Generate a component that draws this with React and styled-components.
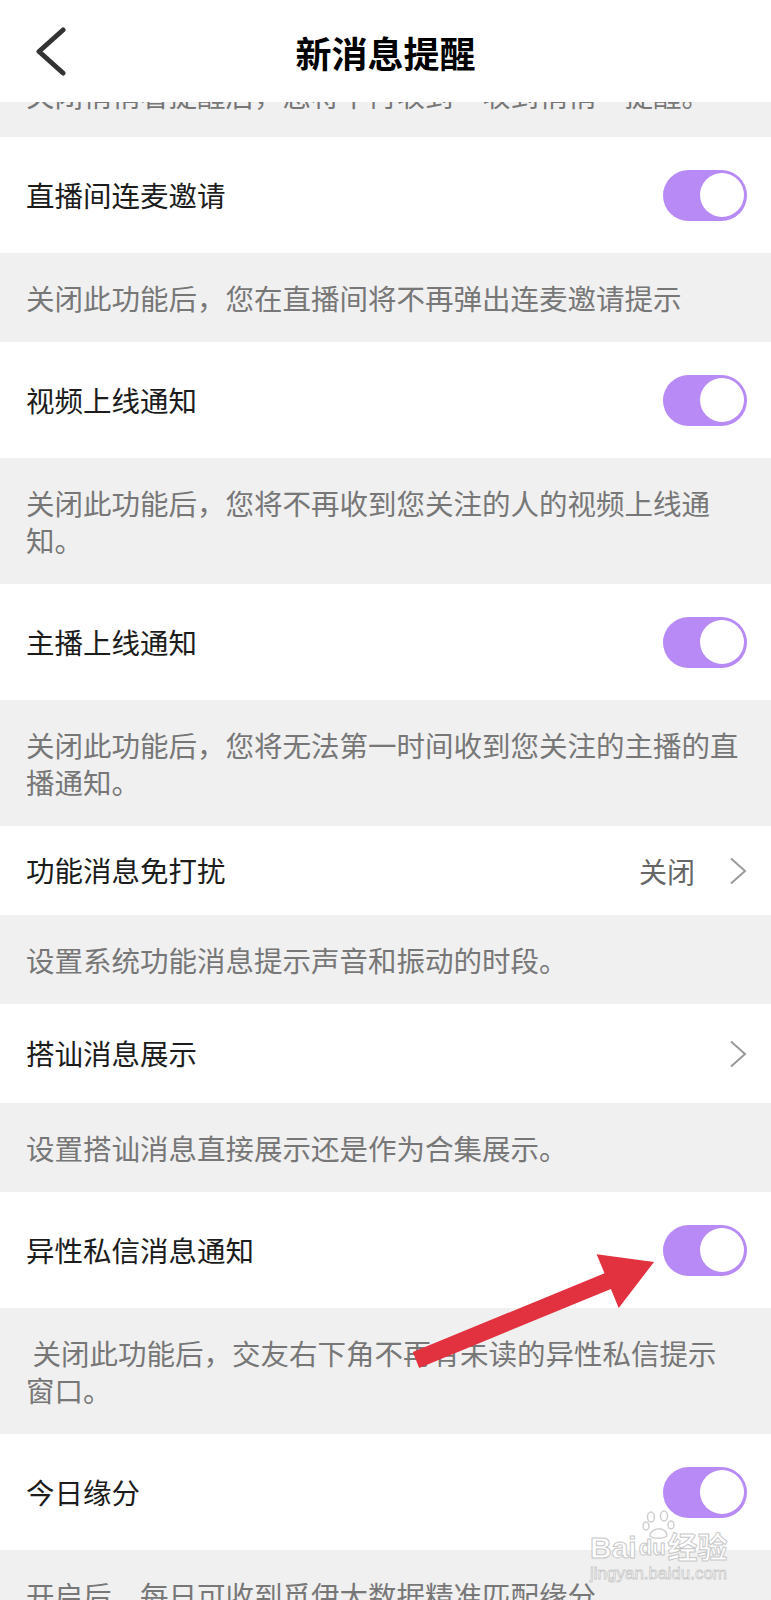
import React from 'react'
import styled, { createGlobalStyle } from 'styled-components'

const GlobalStyle = createGlobalStyle`
  html, body {
    margin: 0;
    padding: 0;
    background: #fff;
  }
  body {
    font-family: "Noto Sans CJK SC", "Noto Sans", sans-serif;
  }
`

const items = [
  { label: '直播间连麦邀请', type: 'toggle', note: '关闭此功能后，您在直播间将不再弹出连麦邀请提示' },
  { label: '视频上线通知', type: 'toggle', note: '关闭此功能后，您将不再收到您关注的人的视频上线通知。' },
  { label: '主播上线通知', type: 'toggle', note: '关闭此功能后，您将无法第一时间收到您关注的主播的直播通知。' },
  { label: '功能消息免打扰', type: 'link', value: '关闭', height: 89, note: '设置系统功能消息提示声音和振动的时段。' },
  { label: '搭讪消息展示', type: 'link', height: 99, note: '设置搭讪消息直接展示还是作为合集展示。' },
  { label: '异性私信消息通知', type: 'toggle', note: '\u00a0关闭此功能后，交友右下角不再有未读的异性私信提示窗口。' },
  { label: '今日缘分', type: 'toggle', note: '开启后，每日可收到觅伊大数据精准匹配缘分。' },
]

export default function App() {
  return (
    <Page>
      <GlobalStyle />
      <Header>
        <BackButton>
          <svg width="36" height="50" viewBox="0 0 36 50">
            <polyline points="30,3 6,24.5 30,46" fill="none" stroke="#333" strokeWidth="5" strokeLinecap="round" strokeLinejoin="round" />
          </svg>
        </BackButton>
        <Title>新消息提醒</Title>
        <span />
      </Header>

      <ClippedNote>
        <NoteText>关闭悄悄看提醒后，您将不再收到“收到悄悄”提醒。</NoteText>
      </ClippedNote>

      {items.map((item) => (
        <React.Fragment key={item.label}>
          <Row $height={item.height || 116}>
            <Label>{item.label}</Label>
            {item.type === 'toggle' ? (
              <Toggle>
                <Knob />
              </Toggle>
            ) : (
              <Trailing>
                {item.value && <Value>{item.value}</Value>}
                <svg width="18" height="28" viewBox="0 0 18 28">
                  <polyline points="2,1.5 16,14 2,26.5" fill="none" stroke="#9a9a9a" strokeWidth="2" />
                </svg>
              </Trailing>
            )}
          </Row>
          <Note>{item.note}</Note>
        </React.Fragment>
      ))}

      <Arrow width="270" height="140" viewBox="0 0 270 140">
        <polygon
          points="12.8,112.1 204.5,33.2 196.6,14.2 254,22 218.7,67.9 210.9,48.9 19.2,127.9"
          fill="#e2323f"
        />
      </Arrow>

      <Watermark>
        <Paw width="34" height="30" viewBox="0 0 34 30">
          <g fill="none" stroke="#cfcfcf" strokeWidth="1.5">
            <ellipse cx="9" cy="7" rx="3.5" ry="5" />
            <ellipse cx="22" cy="6" rx="3.5" ry="5" />
            <ellipse cx="4" cy="16" rx="3" ry="4" />
            <ellipse cx="29" cy="15" rx="3" ry="4" />
            <path d="M8 26 C 8 17, 25 16, 25 26 C 22 29, 11 29, 8 26 Z" />
          </g>
        </Paw>
        <Brand>Bai<BrandBox>du</BrandBox>经验</Brand>
        <Site>jingyan.baidu.com</Site>
      </Watermark>
    </Page>
  )
}

const Page = styled.div`
  position: relative;
  width: 771px;
  height: 1600px;
  overflow: hidden;
  background: #f0f0f0;
`

const Header = styled.div`
  position: relative;
  z-index: 2;
  display: grid;
  grid-template-columns: 1fr auto 1fr;
  align-items: center;
  height: 102px;
  background: #fff;
`

const BackButton = styled.div`
  display: flex;
  align-items: center;
  padding-left: 33px;
  padding-top: 2px;
`

const Title = styled.h1`
  margin: 0;
  font-size: 36px;
  font-weight: 700;
  color: #000;
  line-height: 1;
  padding-top: 2px;
`

const ClippedNote = styled.div`
  height: 35px;
  overflow: hidden;
  background: #f0f0f0;
`

const NoteText = styled.div`
  margin-top: -26px;
  padding: 0 20px 0 26px;
  font-size: 28.5px;
  line-height: 37px;
  color: #777;
  white-space: nowrap;
`

const Row = styled.div`
  display: flex;
  align-items: center;
  justify-content: space-between;
  box-sizing: border-box;
  height: ${(p) => p.$height}px;
  padding: 0 24px 0 26px;
  background: #fff;
`

const Label = styled.span`
  font-size: 28.5px;
  color: #1c1c1c;
  line-height: 1;
`

const Toggle = styled.div`
  display: flex;
  align-items: center;
  justify-content: flex-end;
  box-sizing: border-box;
  width: 84px;
  height: 51px;
  padding-right: 3.5px;
  border-radius: 26px;
  background: #b88af6;
`

const Knob = styled.div`
  width: 44px;
  height: 44px;
  border-radius: 50%;
  background: #fff;
`

const Trailing = styled.div`
  display: flex;
  align-items: center;
  gap: 34px;
  padding-right: 0;
`

const Value = styled.span`
  font-size: 28px;
  color: #666;
  line-height: 1;
`

const Note = styled.div`
  box-sizing: border-box;
  padding: 26px 29px 26px 26px;
  font-size: 28.5px;
  line-height: 37px;
  color: #777;
  background: #f0f0f0;
`

const Arrow = styled.svg`
  position: absolute;
  left: 400px;
  top: 1240px;
  pointer-events: none;
`

const Watermark = styled.div`
  position: absolute;
  left: 590px;
  top: 1510px;
  width: 145px;
  display: flex;
  flex-direction: column;
  align-items: flex-start;
  pointer-events: none;
`

const Paw = styled.svg`
  margin-left: 52px;
  margin-bottom: -8px;
`

const Brand = styled.div`
  display: flex;
  align-items: center;
  font-family: "Liberation Sans", "Noto Sans CJK SC", sans-serif;
  font-size: 30px;
  font-weight: 700;
  line-height: 32px;
  color: #fff;
  -webkit-text-stroke: 1px #c8c8c8;
`

const BrandBox = styled.span`
  margin: 0 2px;
  font-size: 22px;
`

const Site = styled.div`
  font-family: "Liberation Sans", sans-serif;
  font-size: 17px;
  line-height: 20px;
  color: #fff;
  -webkit-text-stroke: 0.8px #c8c8c8;
`
